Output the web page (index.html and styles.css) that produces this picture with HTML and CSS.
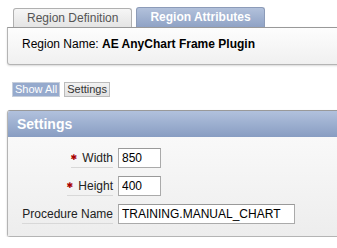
FILE: index.html
```html
<!DOCTYPE html>
<html lang="en">
<head>
   <title>Region Attributes</title>
   <link rel="stylesheet" href="styles.css">
</head>
<body>

   <div class="page">
      <!-- Tabs -->
      <div class="tabs">
         <div class="tab">Region Definition</div>
         <div class="tab active">Region Attributes</div>
      </div>

      <!-- Region name box -->
      <div class="region-box">
         Region Name: <b>AE AnyChart Frame Plugin</b>
      </div>

      <!-- Show All / Settings buttons -->
      <div class="button-group">
         <button class="btn current">Show All</button>
         <button class="btn">Settings</button>
      </div>

      <!-- Settings panel -->
      <div class="panel">
         <div class="panel-header">Settings</div>
         <div class="panel-body">
            <div class="form-row">
               <label class="field-label"><span class="req">&#10033;</span>Width</label>
               <input class="field short" type="text" value="850">
            </div>
            <div class="form-row">
               <label class="field-label"><span class="req">&#10033;</span>Height</label>
               <input class="field short" type="text" value="400">
            </div>
            <div class="form-row">
               <label class="field-label">Procedure Name</label>
               <input class="field long" type="text" value="TRAINING.MANUAL_CHART">
            </div>
         </div>
      </div>
   </div>

</body>
</html>
```

FILE: styles.css
```css
* {
   margin: 0;
   padding: 0;
   box-sizing: border-box;
   font-family: 'Liberation Sans', Arial, sans-serif;
}

body {
   background: #fff;
   overflow: hidden;
   color: #000;
}

.page {
   padding: 7px 0 0 7px;
}

/* Tabs */
.tabs {
   display: flex;
   align-items: flex-end;
   gap: 4px;
   padding-left: 6px;
   height: 20px;
}

.tab {
   height: 19px;
   padding: 0 13px;
   font-size: 12px;
   line-height: 18px;
   color: #555;
   background: linear-gradient(#f6f6f6, #e4e4e4);
   border: 1px solid #b0b0b0;
   border-bottom: none;
   border-radius: 3px 3px 0 0;
}

.tab.active {
   height: 20px;
   line-height: 19px;
   font-weight: bold;
   color: #fff;
   background: linear-gradient(#b2c1db, #8fa2c5);
   border-color: #8c9bb8;
}

/* Region name box */
.region-box {
   margin-right: -10px;
   height: 38px;
   padding: 9px 0 0 14px;
   font-size: 12px;
   line-height: 14px;
   background: linear-gradient(#fdfdfd, #f0f0f0);
   border: 1px solid #b4b4b4;
   border-top-color: #999;
   border-radius: 0 0 0 3px;
   box-shadow: 0 1px 2px rgba(0, 0, 0, 0.15);
}

/* Show All / Settings */
.button-group {
   display: flex;
   gap: 4px;
   margin-top: 17px;
   padding-left: 5px;
}

.btn {
   height: 15px;
   padding: 0 2px;
   font-size: 11px;
   line-height: 13px;
   color: #333;
   background: linear-gradient(#f2f2f2, #e2e2e2);
   border: 1px solid #bbb;
}

.btn.current {
   color: #fff;
   background: #96aacd;
   border-color: #c6cedb;
}

/* Settings panel */
.panel {
   margin-top: 13px;
   margin-right: -10px;
   border: 1px solid #b4b4b4;
   border-top-color: #999;
   border-radius: 3px 0 0 3px;
   box-shadow: 0 1px 2px rgba(0, 0, 0, 0.2);
}

.panel-header {
   height: 26px;
   padding: 5px 0 0 9px;
   font-size: 14px;
   line-height: 16px;
   font-weight: bold;
   color: #fff;
   background: linear-gradient(#b1c1dd, #889dc2);
   border-radius: 2px 0 0 0;
}

.panel-body {
   display: flex;
   flex-direction: column;
   gap: 8px;
   padding: 11px 0 12px 0;
   background: linear-gradient(#f9f9f9, #ededed);
}

.form-row {
   display: grid;
   grid-template-columns: 105px auto;
   column-gap: 5px;
   align-items: end;
}

.field-label {
   justify-self: end;
   padding-bottom: 2px;
   font-size: 12px;
   line-height: 14px;
   color: #222;
   border-bottom: 1px solid #d8d8d8;
}

.req {
   color: #a80000;
   font-size: 8px;
   margin-right: 5px;
   font-family: 'DejaVu Sans', sans-serif;
   vertical-align: 2px;
}

.field {
   height: 20px;
   padding: 0 3px;
   font-size: 12px;
   color: #000;
   background: #fff;
   border: 1px solid #aaa;
   border-top-color: #999;
   outline: none;
}

.field.short {
   width: 43px;
}

.field.long {
   width: 177px;
}
```
